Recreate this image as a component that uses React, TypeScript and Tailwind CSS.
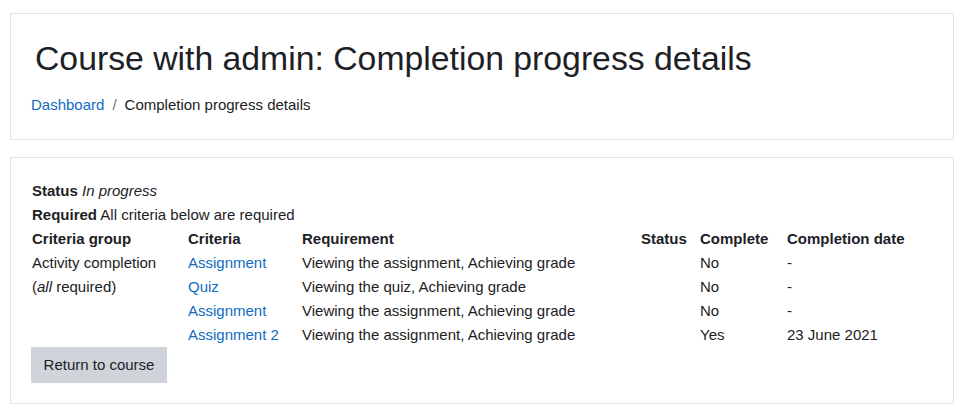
const rows = [
  { group: "Activity completion", criteria: "Assignment", req: "Viewing the assignment, Achieving grade", complete: "No", date: "-" },
  { group: "allreq", criteria: "Quiz", req: "Viewing the quiz, Achieving grade", complete: "No", date: "-" },
  { group: "", criteria: "Assignment", req: "Viewing the assignment, Achieving grade", complete: "No", date: "-" },
  { group: "", criteria: "Assignment 2", req: "Viewing the assignment, Achieving grade", complete: "Yes", date: "23 June 2021" },
];

export default function App() {
  return (
    <div className="min-h-[408px] bg-white px-[10px] pt-[13px] font-['Liberation_Sans',Arial,sans-serif] text-[15px] text-[#1d2125]">
      <div className="h-[127px] w-[944px] border border-[#dee2e6] px-5 pt-5">
        <h1 className="ml-1 mt-1 text-[33.75px] leading-[40px] font-normal">
          Course with admin: Completion progress details
        </h1>
        <nav className="mt-4 flex items-center leading-[22px]">
          <a href="#" className="text-[#0f6cbf]">Dashboard</a>
          <span className="px-2 text-[#6a737b]">/</span>
          <span>Completion progress details</span>
        </nav>
      </div>

      <div className="mt-[17px] h-[247px] w-[944px] border border-[#dee2e6] px-5 pt-[21px]">
        <div className="pl-px leading-6">
          <div>
            <b>Status</b> <i>In progress</i>
          </div>
          <div>
            <b>Required</b> All criteria below are required
          </div>
        </div>
        <table className="ml-px border-collapse leading-6">
          <thead>
            <tr className="text-left">
              <th className="w-[156px] p-0 font-bold">Criteria group</th>
              <th className="w-[114px] p-0 font-bold">Criteria</th>
              <th className="w-[339px] p-0 font-bold">Requirement</th>
              <th className="w-[59px] p-0 font-bold">Status</th>
              <th className="w-[87px] p-0 font-bold">Complete</th>
              <th className="p-0 font-bold">Completion date</th>
            </tr>
          </thead>
          <tbody>
            {rows.map((r, i) => (
              <tr key={i}>
                <td className="p-0">
                  {r.group === "allreq" ? (
                    <>
                      (<i>all</i> required)
                    </>
                  ) : (
                    r.group
                  )}
                </td>
                <td className="p-0">
                  <a href="#" className="text-[#0f6cbf]">{r.criteria}</a>
                </td>
                <td className="p-0">{r.req}</td>
                <td className="p-0"></td>
                <td className="p-0">{r.complete}</td>
                <td className="p-0">{r.date}</td>
              </tr>
            ))}
          </tbody>
        </table>
        <button className="block h-9 w-[136px] border border-transparent bg-[#ced4da] leading-[22px] text-[#1d2125]">
          Return to course
        </button>
      </div>
    </div>
  );
}
